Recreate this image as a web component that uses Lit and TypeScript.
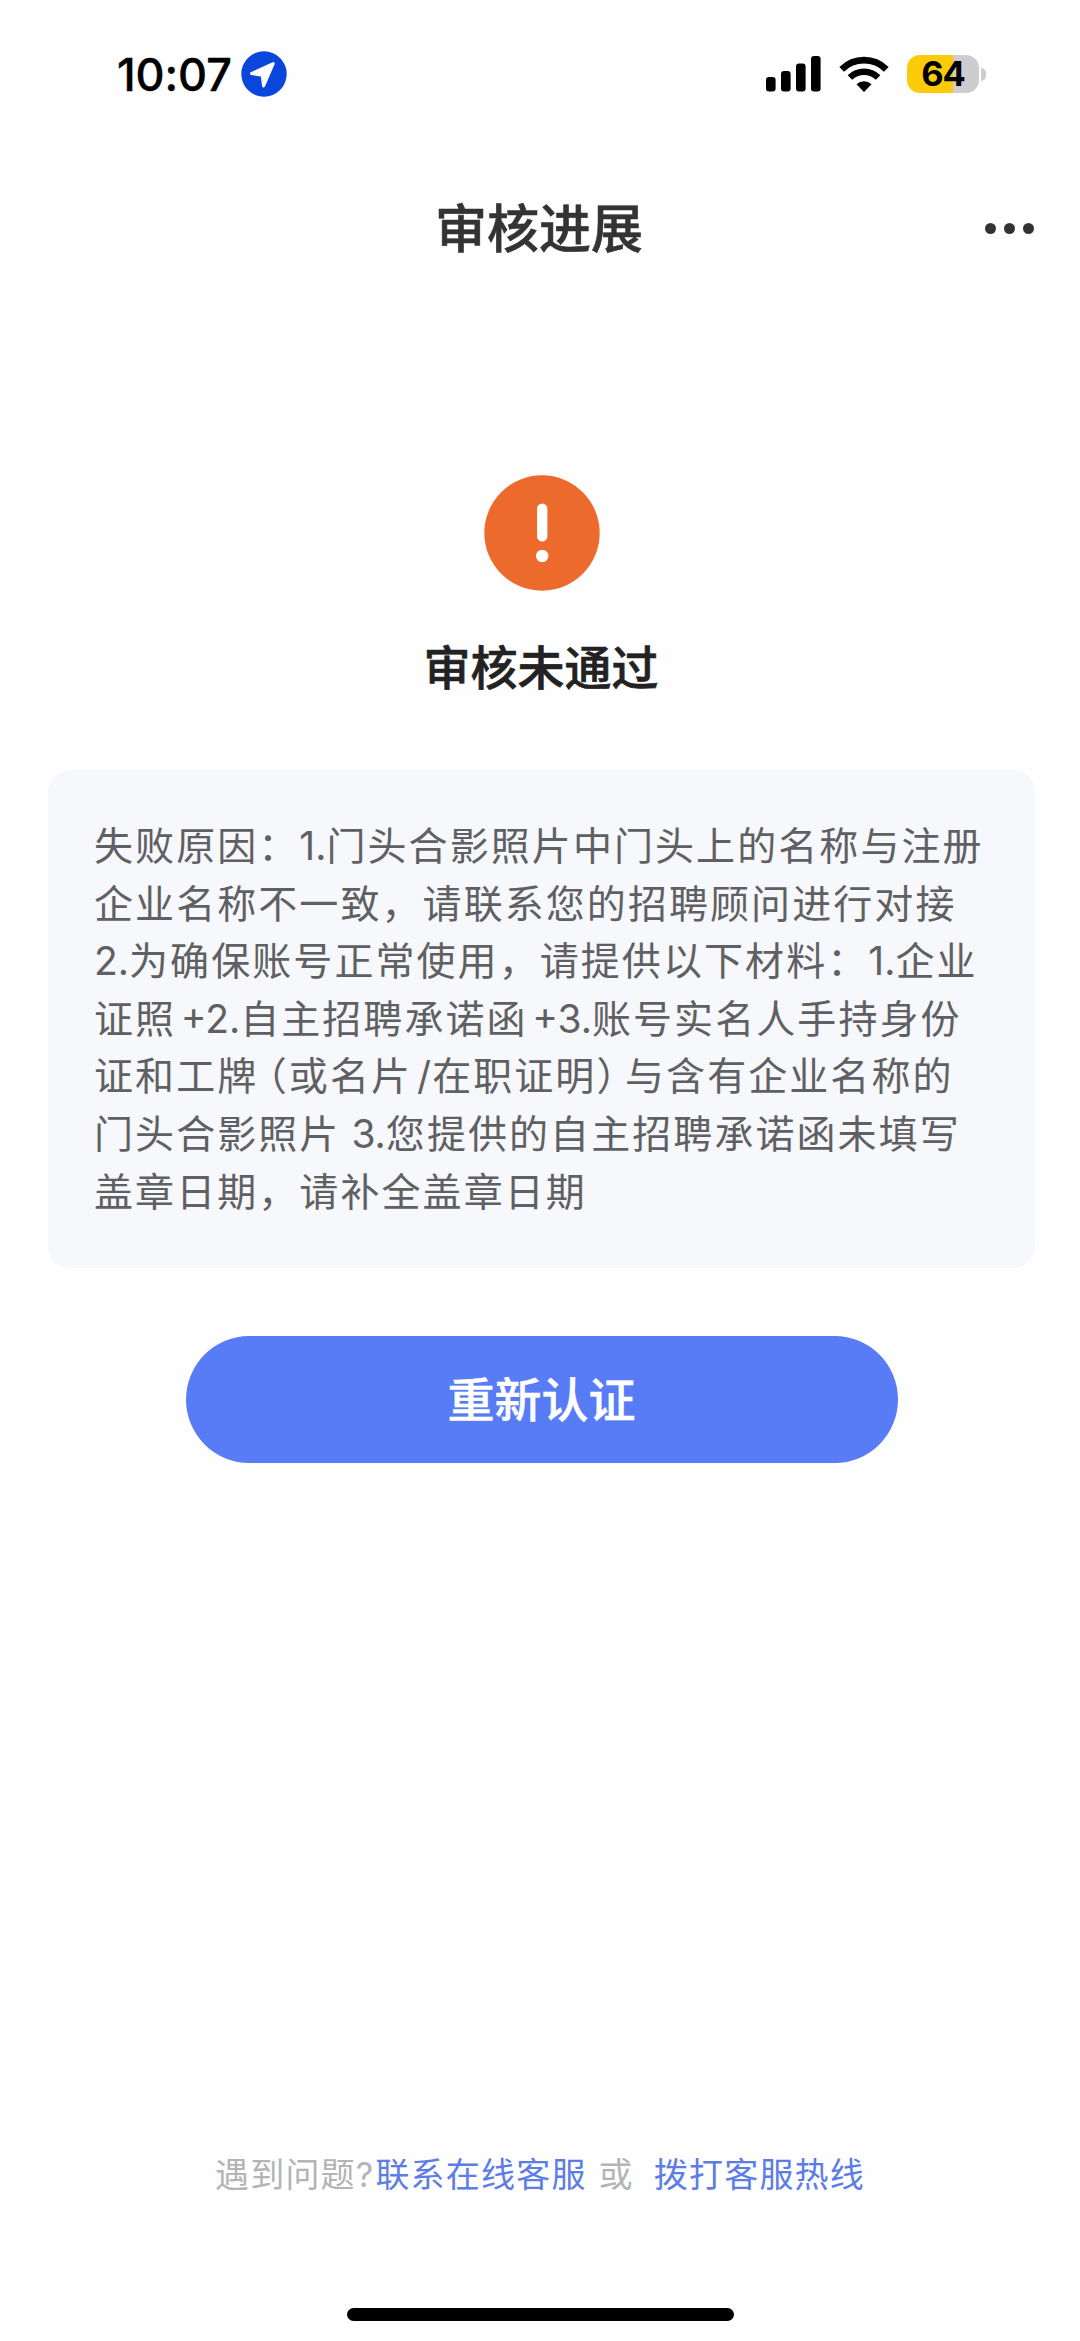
import { LitElement, html, css, svg } from "lit";
import { customElement } from "lit/decorators.js";

const fontStack = css`Inter, "Noto Sans CJK SC", sans-serif`;

@customElement("status-bar")
class StatusBar extends LitElement {
  static styles = css`
    :host {
      display: flex;
      align-items: center;
      justify-content: space-between;
      height: 148px;
      box-sizing: border-box;
      padding: 0 94px 0 117px;
      font-family: ${fontStack};
    }
    .left,
    .right {
      display: flex;
      align-items: center;
    }
    .time {
      width: 124px;
      font-size: 45px;
      font-weight: 500;
      letter-spacing: -0.1px;
      white-space: nowrap;
      -webkit-text-stroke: 0.4px #000;
    }
    .signal {
      margin-right: 18px;
    }
    .wifi {
      margin-right: 18px;
    }
    .battery {
      display: flex;
      align-items: center;
      justify-content: center;
      width: 72px;
      height: 38px;
      border-radius: 13px;
      background: linear-gradient(90deg, #fbcb0a 0 46px, #cdcdcf 46px);
      font-size: 34.5px;
      font-weight: 700;
      letter-spacing: -1px;
      line-height: 38px;
    }
    .nub {
      width: 5px;
      height: 13px;
      margin-left: 2px;
      border-radius: 0 6px 6px 0;
      background: #cdcdcf;
    }
    svg {
      display: block;
    }
  `;

  render() {
    const bars = [
      [0, 21],
      [15, 15],
      [30, 7.5],
      [45, 0],
    ];
    return html`
      <div class="left">
        <span class="time">10:07</span>
        <svg width="46" height="46" viewBox="0 0 46 46">
          <circle cx="23" cy="23" r="22.7" fill="#0a45dc" />
          <path d="M32.2 12.6 10.5 22.6 21.2 24.3 22.6 35Z" fill="#fff" stroke="#fff" stroke-width="3" stroke-linejoin="round" />
        </svg>
      </div>
      <div class="right">
        <svg class="signal" width="55" height="36" viewBox="0 0 55 36">
          ${bars.map(([x, y]) => svg`<rect x=${x} y=${y} width="9.6" height=${35.5 - y} rx="3" />`)}
        </svg>
        <svg class="wifi" width="50" height="36" viewBox="0 0 50 36">
          <path d="M2.7 13.3A31.6 31.6 0 0 1 47.3 13.3" fill="none" stroke="#000" stroke-width="6.6" />
          <path d="M10.9 21.5A20 20 0 0 1 39.1 21.5" fill="none" stroke="#000" stroke-width="6.4" />
          <path d="M25 36 17.5 28.3A10.8 10.8 0 0 1 32.5 28.3Z" />
        </svg>
        <span class="battery">64</span>
        <span class="nub"></span>
      </div>
    `;
  }
}

@customElement("nav-header")
class NavHeader extends LitElement {
  static styles = css`
    :host {
      display: grid;
      grid-template-columns: 1fr auto 1fr;
      align-items: center;
      height: 160px;
      padding: 0 46px 0 44px;
      font-family: ${fontStack};
      color: #333;
    }
    .title {
      grid-column: 2;
      padding-top: 3px;
      font-size: 52px;
      font-weight: 500;
      line-height: 76px;
      -webkit-text-stroke: 0.6px #333;
    }
    .more {
      display: flex;
      gap: 8px;
      justify-self: end;
    }
    .dot {
      width: 11px;
      height: 11px;
      border-radius: 50%;
      background: #333;
    }
  `;

  render() {
    return html`
      <span class="title">审核进展</span>
      <span class="more"><i class="dot"></i><i class="dot"></i><i class="dot"></i></span>
    `;
  }
}

@customElement("app-root")
class AppRoot extends LitElement {
  static styles = css`
    :host {
      display: flex;
      flex-direction: column;
      height: 2341px;
      box-sizing: border-box;
      overflow: hidden;
      background: #fefefe;
      color: #000;
      font-family: ${fontStack};
    }
    .result {
      display: flex;
      flex-direction: column;
      align-items: center;
      padding: 167px 0 0 2px;
    }
    .alert {
      display: block;
      margin-left: 1px;
    }
    .heading {
      margin: 42px 0 0;
      font-size: 47px;
      font-weight: 500;
      line-height: 70px;
      color: #222;
      -webkit-text-stroke: 0.6px #222;
    }
    .reason {
      box-sizing: border-box;
      margin: 67px 45px 0 48px;
      height: 498px;
      padding: 47px 0 0 46px;
      border-radius: 22px;
      background: #f7f8fb;
      color: #5f6063;
      font-size: 39px;
      letter-spacing: 2.07px;
      line-height: 57.6px;
      white-space: pre;
    }
    .line {
      display: block;
    }
    .num {
      letter-spacing: 0;
    }
    .plus {
      margin-left: 4.5px;
    }
    .slash {
      margin-left: 5px;
      margin-right: 1px;
    }
    .open,
    .close {
      font-feature-settings: "halt" 1;
    }
    .open {
      margin-left: 9px;
    }
    .close {
      margin-right: 7px;
    }
    .retry {
      align-self: center;
      width: 712px;
      height: 127px;
      margin: 68px 0 0 3px;
      padding: 0;
      border: 0;
      border-radius: 64px;
      background: #587bf6;
      color: #fff;
      font: 500 47px/127px ${fontStack};
      -webkit-text-stroke: 0.5px #fff;
    }
    .help {
      display: flex;
      margin: auto 0 0 215px;
      font-size: 34px;
      letter-spacing: 1.2px;
      line-height: 50px;
      color: #b3b4b6;
      white-space: nowrap;
    }
    .link {
      color: #5c7ce6;
    }
    .online {
      margin-left: 1px;
    }
    .or {
      margin: 0 20px 0 12px;
    }
    .home {
      align-self: center;
      width: 387px;
      height: 13px;
      margin: 108px 0 20px;
      border-radius: 7px;
      background: #000;
    }
  `;

  render() {
    return html`
      <status-bar></status-bar>
      <nav-header></nav-header>
      <section class="result">
        <svg class="alert" width="116" height="116" viewBox="0 0 116 116">
          <circle cx="58" cy="58" r="57.7" fill="#ec6a2b" />
          <rect x="53" y="28.5" width="10.4" height="38" rx="5.2" fill="#fff" />
          <circle cx="58.2" cy="81" r="6.2" fill="#fff" />
        </svg>
        <h1 class="heading">审核未通过</h1>
      </section>
      <section class="reason"><span class="line">失败原因：<span class="num">1.</span>门头合影照片中门头上的名称与注册</span><span class="line">企业名称不一致，请联系您的招聘顾问进行对接</span><span class="line"><span class="num">2.</span>为确保账号正常使用，请提供以下材料：<span class="num">1.</span>企业</span><span class="line">证照<span class="num plus">+2.</span>自主招聘承诺函<span class="num plus">+3.</span>账号实名人手持身份</span><span class="line">证和工牌<span class="open">（</span>或名片<span class="num slash">/</span>在职证明<span class="close">）</span>与含有企业名称的</span><span class="line">门头合影照片<span class="num"> 3.</span>您提供的自主招聘承诺函未填写</span><span class="line">盖章日期，请补全盖章日期</span></section>
      <button class="retry">重新认证</button>
      <footer class="help">
        <span>遇到问题?</span><span class="link online">联系在线客服</span><span class="or">或</span><span class="link">拨打客服热线</span>
      </footer>
      <div class="home"></div>
    `;
  }
}
